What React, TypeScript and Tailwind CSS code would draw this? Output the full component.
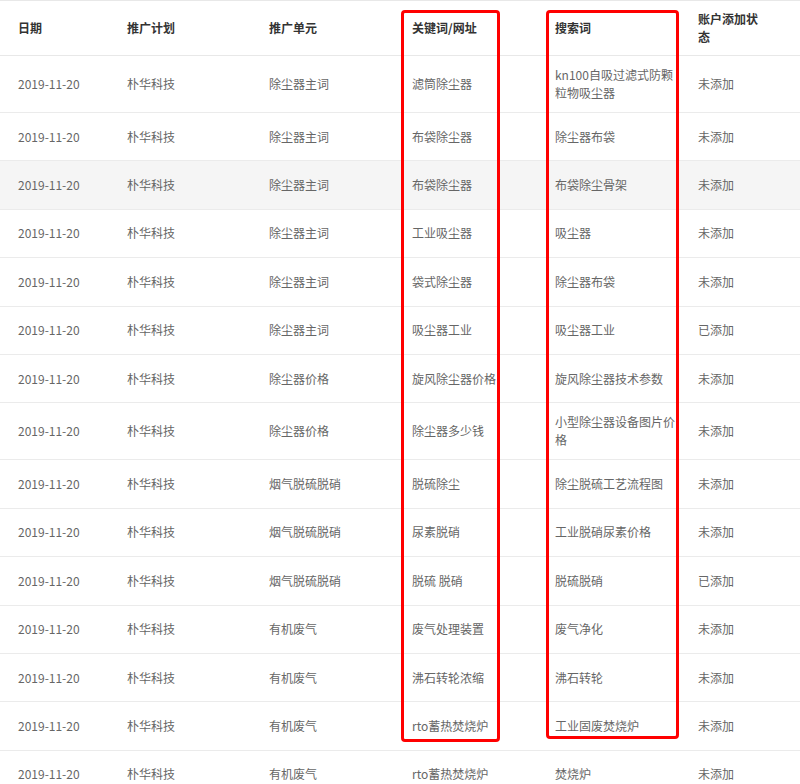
import React from "react";

type Row = {
  date: string;
  plan: string;
  unit: string;
  keyword: string;
  query: string;
  status: string;
  hover?: boolean;
};

const ROWS: Row[] = [
  { date: "2019-11-20", plan: "朴华科技", unit: "除尘器主词", keyword: "滤筒除尘器", query: "kn100自吸过滤式防颗粒物吸尘器", status: "未添加" },
  { date: "2019-11-20", plan: "朴华科技", unit: "除尘器主词", keyword: "布袋除尘器", query: "除尘器布袋", status: "未添加" },
  { date: "2019-11-20", plan: "朴华科技", unit: "除尘器主词", keyword: "布袋除尘器", query: "布袋除尘骨架", status: "未添加", hover: true },
  { date: "2019-11-20", plan: "朴华科技", unit: "除尘器主词", keyword: "工业吸尘器", query: "吸尘器", status: "未添加" },
  { date: "2019-11-20", plan: "朴华科技", unit: "除尘器主词", keyword: "袋式除尘器", query: "除尘器布袋", status: "未添加" },
  { date: "2019-11-20", plan: "朴华科技", unit: "除尘器主词", keyword: "吸尘器工业", query: "吸尘器工业", status: "已添加" },
  { date: "2019-11-20", plan: "朴华科技", unit: "除尘器价格", keyword: "旋风除尘器价格", query: "旋风除尘器技术参数", status: "未添加" },
  { date: "2019-11-20", plan: "朴华科技", unit: "除尘器价格", keyword: "除尘器多少钱", query: "小型除尘器设备图片价格", status: "未添加" },
  { date: "2019-11-20", plan: "朴华科技", unit: "烟气脱硫脱硝", keyword: "脱硫除尘", query: "除尘脱硫工艺流程图", status: "未添加" },
  { date: "2019-11-20", plan: "朴华科技", unit: "烟气脱硫脱硝", keyword: "尿素脱硝", query: "工业脱硝尿素价格", status: "未添加" },
  { date: "2019-11-20", plan: "朴华科技", unit: "烟气脱硫脱硝", keyword: "脱硫 脱硝", query: "脱硫脱硝", status: "已添加" },
  { date: "2019-11-20", plan: "朴华科技", unit: "有机废气", keyword: "废气处理装置", query: "废气净化", status: "未添加" },
  { date: "2019-11-20", plan: "朴华科技", unit: "有机废气", keyword: "沸石转轮浓缩", query: "沸石转轮", status: "未添加" },
  { date: "2019-11-20", plan: "朴华科技", unit: "有机废气", keyword: "rto蓄热焚烧炉", query: "工业固废焚烧炉", status: "未添加" },
  { date: "2019-11-20", plan: "朴华科技", unit: "有机废气", keyword: "rto蓄热焚烧炉", query: "焚烧炉", status: "未添加" },
];

const FONT = "font-['Noto_Sans_CJK_SC','Noto_Sans',sans-serif]";

export default function App() {
  const th = "h-[54px] py-[9px] pl-[18px] pr-[2px] text-left align-middle text-[12px] leading-[18px] font-bold text-[#333] border-b border-[#e8e8e8]";
  const td = "h-[48.4px] py-[10px] pl-[18px] pr-[2px] align-middle text-[12px] leading-[18px] text-[#666] border-b border-[#ebebeb]";

  return (
    <div className={`relative w-[800px] h-[784px] overflow-hidden bg-white ${FONT}`}>
      <table className="w-[800px] table-fixed border-collapse border-t border-[#e8e8e8]">
        <colgroup>
          <col className="w-[109px]" />
          <col className="w-[142px]" />
          <col className="w-[143px]" />
          <col className="w-[143px]" />
          <col className="w-[143px]" />
          <col className="w-[120px]" />
        </colgroup>
        <thead>
          <tr>
            <th className={th}>日期</th>
            <th className={th}>推广计划</th>
            <th className={th}>推广单元</th>
            <th className={th}>关键词/网址</th>
            <th className={th}>搜索词</th>
            <th className={th}>
              <div className="w-[62px]">账户添加状态</div>
            </th>
          </tr>
        </thead>
        <tbody>
          {ROWS.map((r, i) => (
            <tr key={i} className={r.hover ? "bg-[#f5f5f5]" : "bg-white"}>
              <td className={td}>{r.date}</td>
              <td className={td}>{r.plan}</td>
              <td className={td}>{r.unit}</td>
              <td className={td}>{r.keyword}</td>
              <td className={td}>{r.query}</td>
              <td className={td}>{r.status}</td>
            </tr>
          ))}
        </tbody>
      </table>

      {/* annotation boxes */}
      <div className="absolute left-[401px] top-[10px] w-[99px] h-[732px] rounded-[4px] border-[3px] border-[#f00]" />
      <div className="absolute left-[546px] top-[10px] w-[133px] h-[729px] rounded-[4px] border-[3px] border-[#f00]" />
    </div>
  );
}
